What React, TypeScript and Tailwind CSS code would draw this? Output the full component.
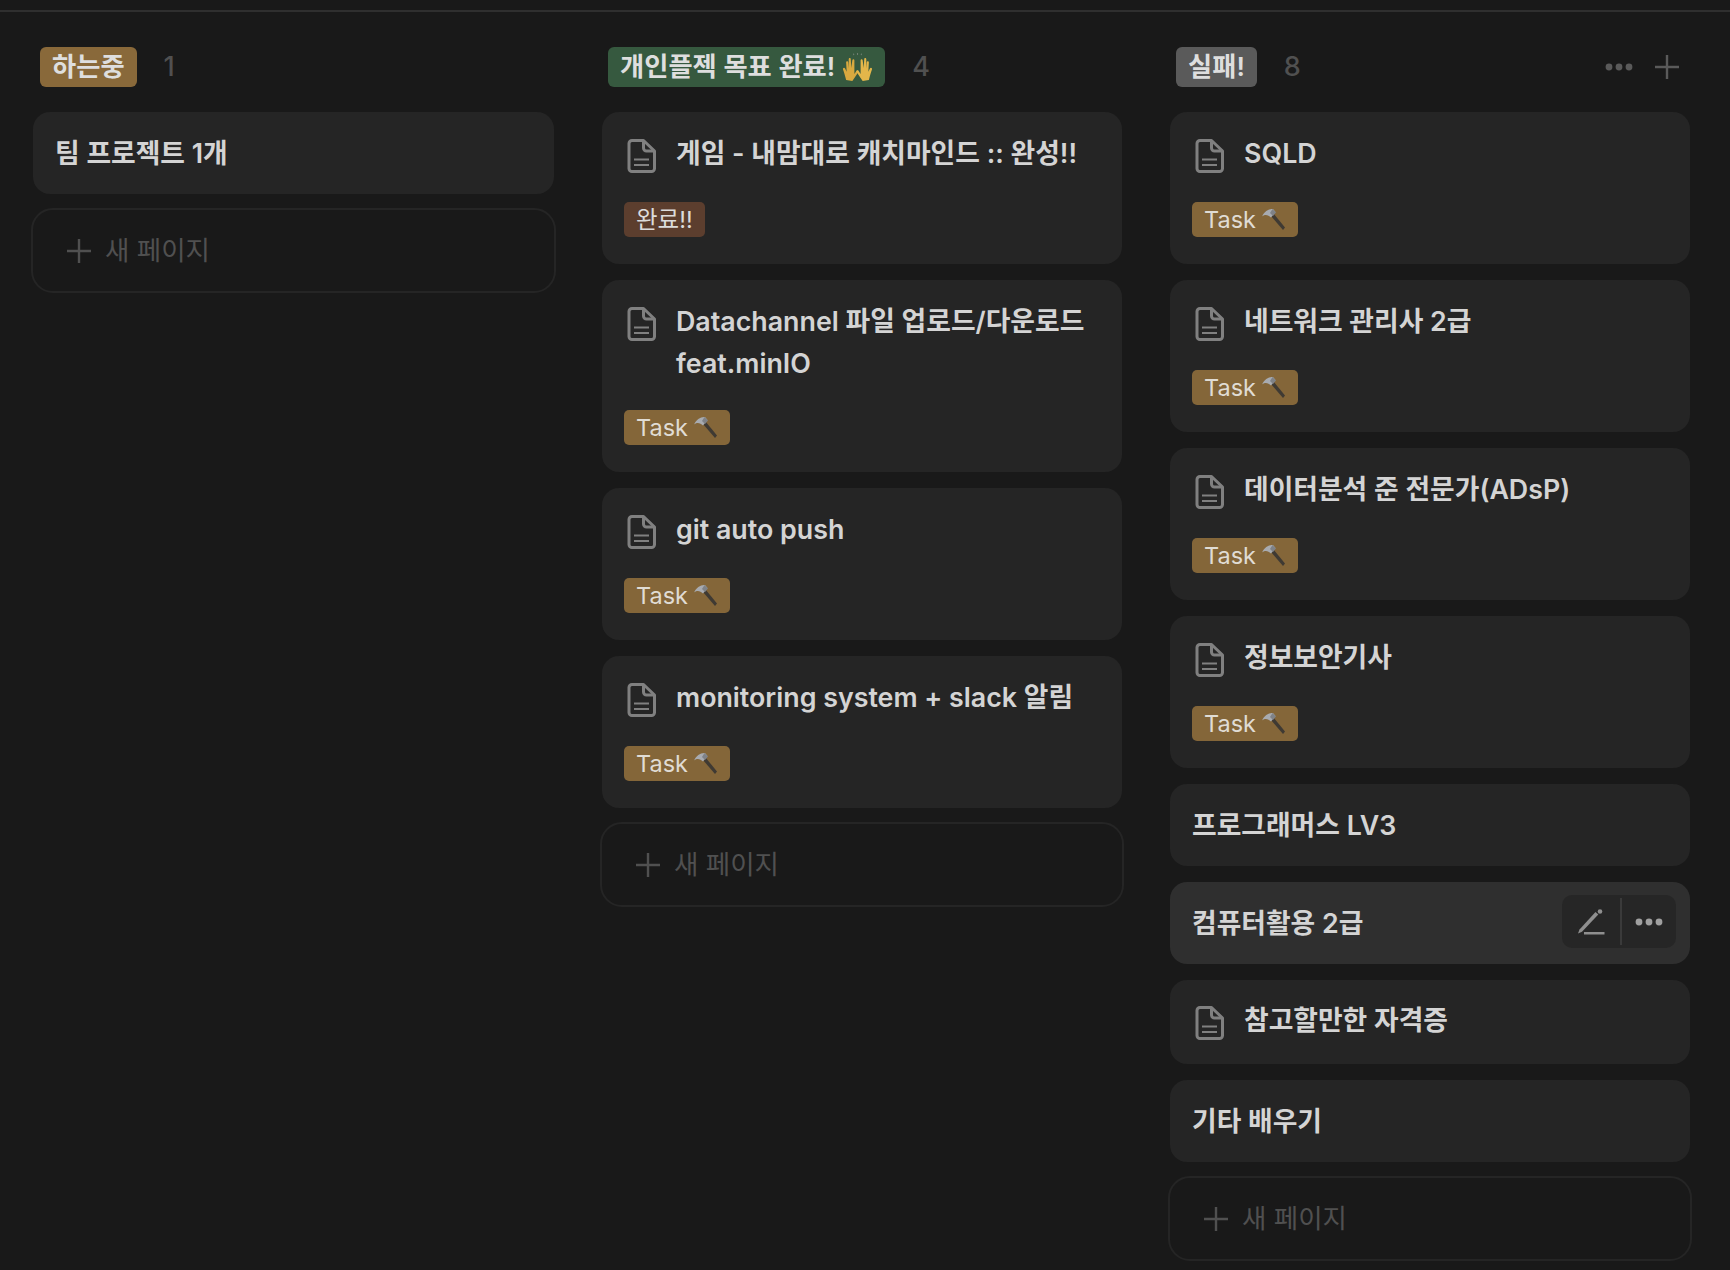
import React from "react";

const font = { fontFamily: '"Inter", "Noto Sans CJK KR", sans-serif' };

function DocIcon() {
  return (
    <svg width="29" height="34" viewBox="0 0 29 34" fill="none" stroke="#808080" strokeWidth="3" className="shrink-0">
      <path d="M5 1.500h11.500L27.500 12v17.500a3 3 0 0 1-3 3H5a3 3 0 0 1-3-3v-25a3 3 0 0 1 3-3z" strokeLinejoin="round" />
      <path d="M16.500 1.500V9a3 3 0 0 0 3 3h8" strokeLinejoin="round" />
      <path d="M7 20.500h15M7 26h15" strokeWidth="2.200" />
    </svg>
  );
}

function Plus({ size = 24, color = "#505050" }: { size?: number; color?: string }) {
  return (
    <svg width={size} height={size} viewBox="0 0 24 24" stroke={color} strokeWidth="2.4" className="shrink-0">
      <path d="M12 0v24M0 12h24" />
    </svg>
  );
}

function Dots({ color }: { color: string }) {
  return (
    <svg width="28" height="8" viewBox="0 0 28 8" fill={color}>
      <circle cx="4" cy="4" r="3.4" />
      <circle cx="14" cy="4" r="3.4" />
      <circle cx="24" cy="4" r="3.4" />
    </svg>
  );
}

function Hammer() {
  return (
    <svg width="26" height="26" viewBox="0 0 26 26" className="shrink-0">
      <path d="M11 9l2.500-2.500L25 20.500l-2 2.500z" fill="#3f3a33" />
      <path d="M2 9.500C4 4.500 9 1.500 13 2l2.500 3-4.500 5.500-2-1.500C6 7.500 4 8 2 9.500z" fill="#a8abb0" />
      <path d="M12.500 2l3.500 3.500-3 3.500-3-3z" fill="#7f8287" />
    </svg>
  );
}

function Hands() {
  return (
    <svg width="31" height="30" viewBox="0 0 30 29" className="shrink-0">
      <path d="M15 1v2M11 1.500l.5 1.500M19 1.500l-.5 1.500" stroke="#6f7f72" strokeWidth="1" />
      <path d="M10 28l-6-1c-1-4-2-7-3-10-.5-2 1.500-2.500 2-1l1.500 3-.5-9c0-1.500 2-1.500 2 0l.5 6 0-9c0-1.500 2-1.500 2 0l.5 8.500 1-7.500c.2-1.500 2-1.300 2 .2v13l2-3c1-1.400 2.500-.4 2 1l-4 6z" fill="#d9a93f" />
      <path d="M20 28l6-1c1-4 2-7 3-10 .5-2-1.500-2.500-2-1l-1.500 3 .5-9c0-1.500-2-1.500-2 0l-.5 6 0-9c0-1.500-2-1.500-2 0l-.5 8.500-1-7.500c-.2-1.500-2-1.300-2 .2v13l-2-3c-1-1.400-2.500-.4-2 1l4 6z" fill="#e3b64a" />
    </svg>
  );
}

function Tag({ done }: { done?: boolean }) {
  if (done) {
    return (
      <span className="inline-flex h-[35px] items-center rounded-[5px] bg-[#5c3e2e] px-[12px] text-[23.5px] text-[#dcdcdc]">
        완료!!
      </span>
    );
  }
  return (
    <span className="inline-flex h-[35px] items-center gap-[4px] rounded-[5px] bg-[#846639] px-[12px] text-[23.5px] text-[#e0dcd4]">
      Task
      <Hammer />
    </span>
  );
}

function TaskCard({ lines, done }: { lines: string[]; done?: boolean }) {
  return (
    <div className="rounded-[17px] bg-[#252525] px-[22px] pt-[21px] pb-[27px]">
      <div className="flex">
        <div className="w-[52px] shrink-0 pt-[6px] pl-[3px]">
          <DocIcon />
        </div>
        <div className="text-[26.8px] leading-[40px] font-semibold text-[#d4d4d4]">
          {lines.map((line, i) => (
            <div key={line} className={i > 0 ? "mt-[2px]" : ""}>
              {line}
            </div>
          ))}
        </div>
      </div>
      <div className={lines.length > 1 ? "mt-[27px] flex" : "mt-[29px] flex"}>
        <Tag done={done} />
      </div>
    </div>
  );
}

function PlainCard({ title }: { title: string }) {
  return (
    <div className="flex h-[82px] items-center rounded-[17px] bg-[#252525] px-[22px] pt-px text-[26.8px] font-semibold text-[#d4d4d4]">
      {title}
    </div>
  );
}

function NewPage() {
  return (
    <div className="mx-[-2px] mt-[-2px] flex h-[85px] items-center gap-[14px] rounded-[22px] border-2 border-[#252525] pl-[34px] text-[26.5px] text-[#505050]">
      <Plus size={24} />
      새 페이지
    </div>
  );
}

function Header({
  label,
  count,
  bg,
  emoji,
  actions,
}: {
  label: string;
  count: number;
  bg: string;
  emoji?: boolean;
  actions?: boolean;
}) {
  return (
    <div className="mb-[25px] flex h-[41px] items-center pl-[6px]">
      <span className={`inline-flex h-[40px] items-center gap-[7px] rounded-[6px] px-[12px] text-[26.3px] font-semibold text-[#dedede] ${bg}`}>
        {label}
        {emoji && <Hands />}
      </span>
      <span className="ml-[27px] pt-[2px] text-[27px] font-medium text-[#505050]">{count}</span>
      {actions && (
        <div className="ml-auto flex items-center gap-[22px] pr-[11px]">
          <Dots color="#5a5a5a" />
          <Plus size={24} color="#5a5a5a" />
        </div>
      )}
    </div>
  );
}

export default function App() {
  return (
    <div className="h-[1270px] overflow-hidden bg-[#191919]" style={font}>
      <div className="h-[12px] border-b-2 border-[#2f2f2f]" />
      <div className="flex gap-[48px] pt-[34px] pl-[33px]">
        <div className="w-[521px]">
          <Header label="하는중" count={1} bg="bg-[#89693a] ml-px" />
          <div className="flex flex-col gap-[16px]">
            <PlainCard title="팀 프로젝트 1개" />
            <NewPage />
          </div>
        </div>

        <div className="w-[520px]">
          <Header label="개인플젝 목표 완료!" count={4} bg="bg-[#36593f]" emoji />
          <div className="flex flex-col gap-[16px]">
            <TaskCard lines={["게임 - 내맘대로 캐치마인드 :: 완성!!"]} done />
            <TaskCard lines={["Datachannel 파일 업로드/다운로드", "feat.minIO"]} />
            <TaskCard lines={["git auto push"]} />
            <TaskCard lines={["monitoring system + slack 알림"]} />
            <NewPage />
          </div>
        </div>

        <div className="w-[520px]">
          <Header label="실패!" count={8} bg="bg-[#5a5a5a]" actions />
          <div className="flex flex-col gap-[16px]">
            <TaskCard lines={["SQLD"]} />
            <TaskCard lines={["네트워크 관리사 2급"]} />
            <TaskCard lines={["데이터분석 준 전문가(ADsP)"]} />
            <TaskCard lines={["정보보안기사"]} />
            <PlainCard title="프로그래머스 LV3" />
            <div className="relative flex h-[82px] items-center rounded-[17px] bg-[#2f2f2f] px-[22px] pt-px text-[26.8px] font-semibold text-[#d4d4d4]">
              컴퓨터활용 2급
              <div className="absolute top-[13px] right-[14px] flex h-[53px] w-[114px] items-center rounded-[10px] bg-[#262626]">
                <div className="flex w-[58px] items-center justify-center">
                  <svg width="28" height="26" viewBox="0 0 28 26" fill="#8f8f8f">
                    <path d="M1 24.500l1.500-4L18.500 3l2.800 2.500L5 22.800z" />
                    <circle cx="23" cy="2.500" r="2.300" />
                    <path d="M7 23h20.500v2.500H7z" />
                  </svg>
                </div>
                <div className="h-[47px] w-[2px] bg-[#3a3a3a]" />
                <div className="flex flex-1 items-center justify-center">
                  <Dots color="#a0a0a0" />
                </div>
              </div>
            </div>
            <div className="flex h-[84px] items-center rounded-[17px] bg-[#252525] px-[22px] text-[26.8px] font-semibold text-[#d4d4d4]">
              <div className="w-[52px] shrink-0 pt-[2px] pl-[3px]">
                <DocIcon />
              </div>
              <span className="-mt-[4px]">참고할만한 자격증</span>
            </div>
            <PlainCard title="기타 배우기" />
            <NewPage />
          </div>
        </div>
      </div>
    </div>
  );
}
